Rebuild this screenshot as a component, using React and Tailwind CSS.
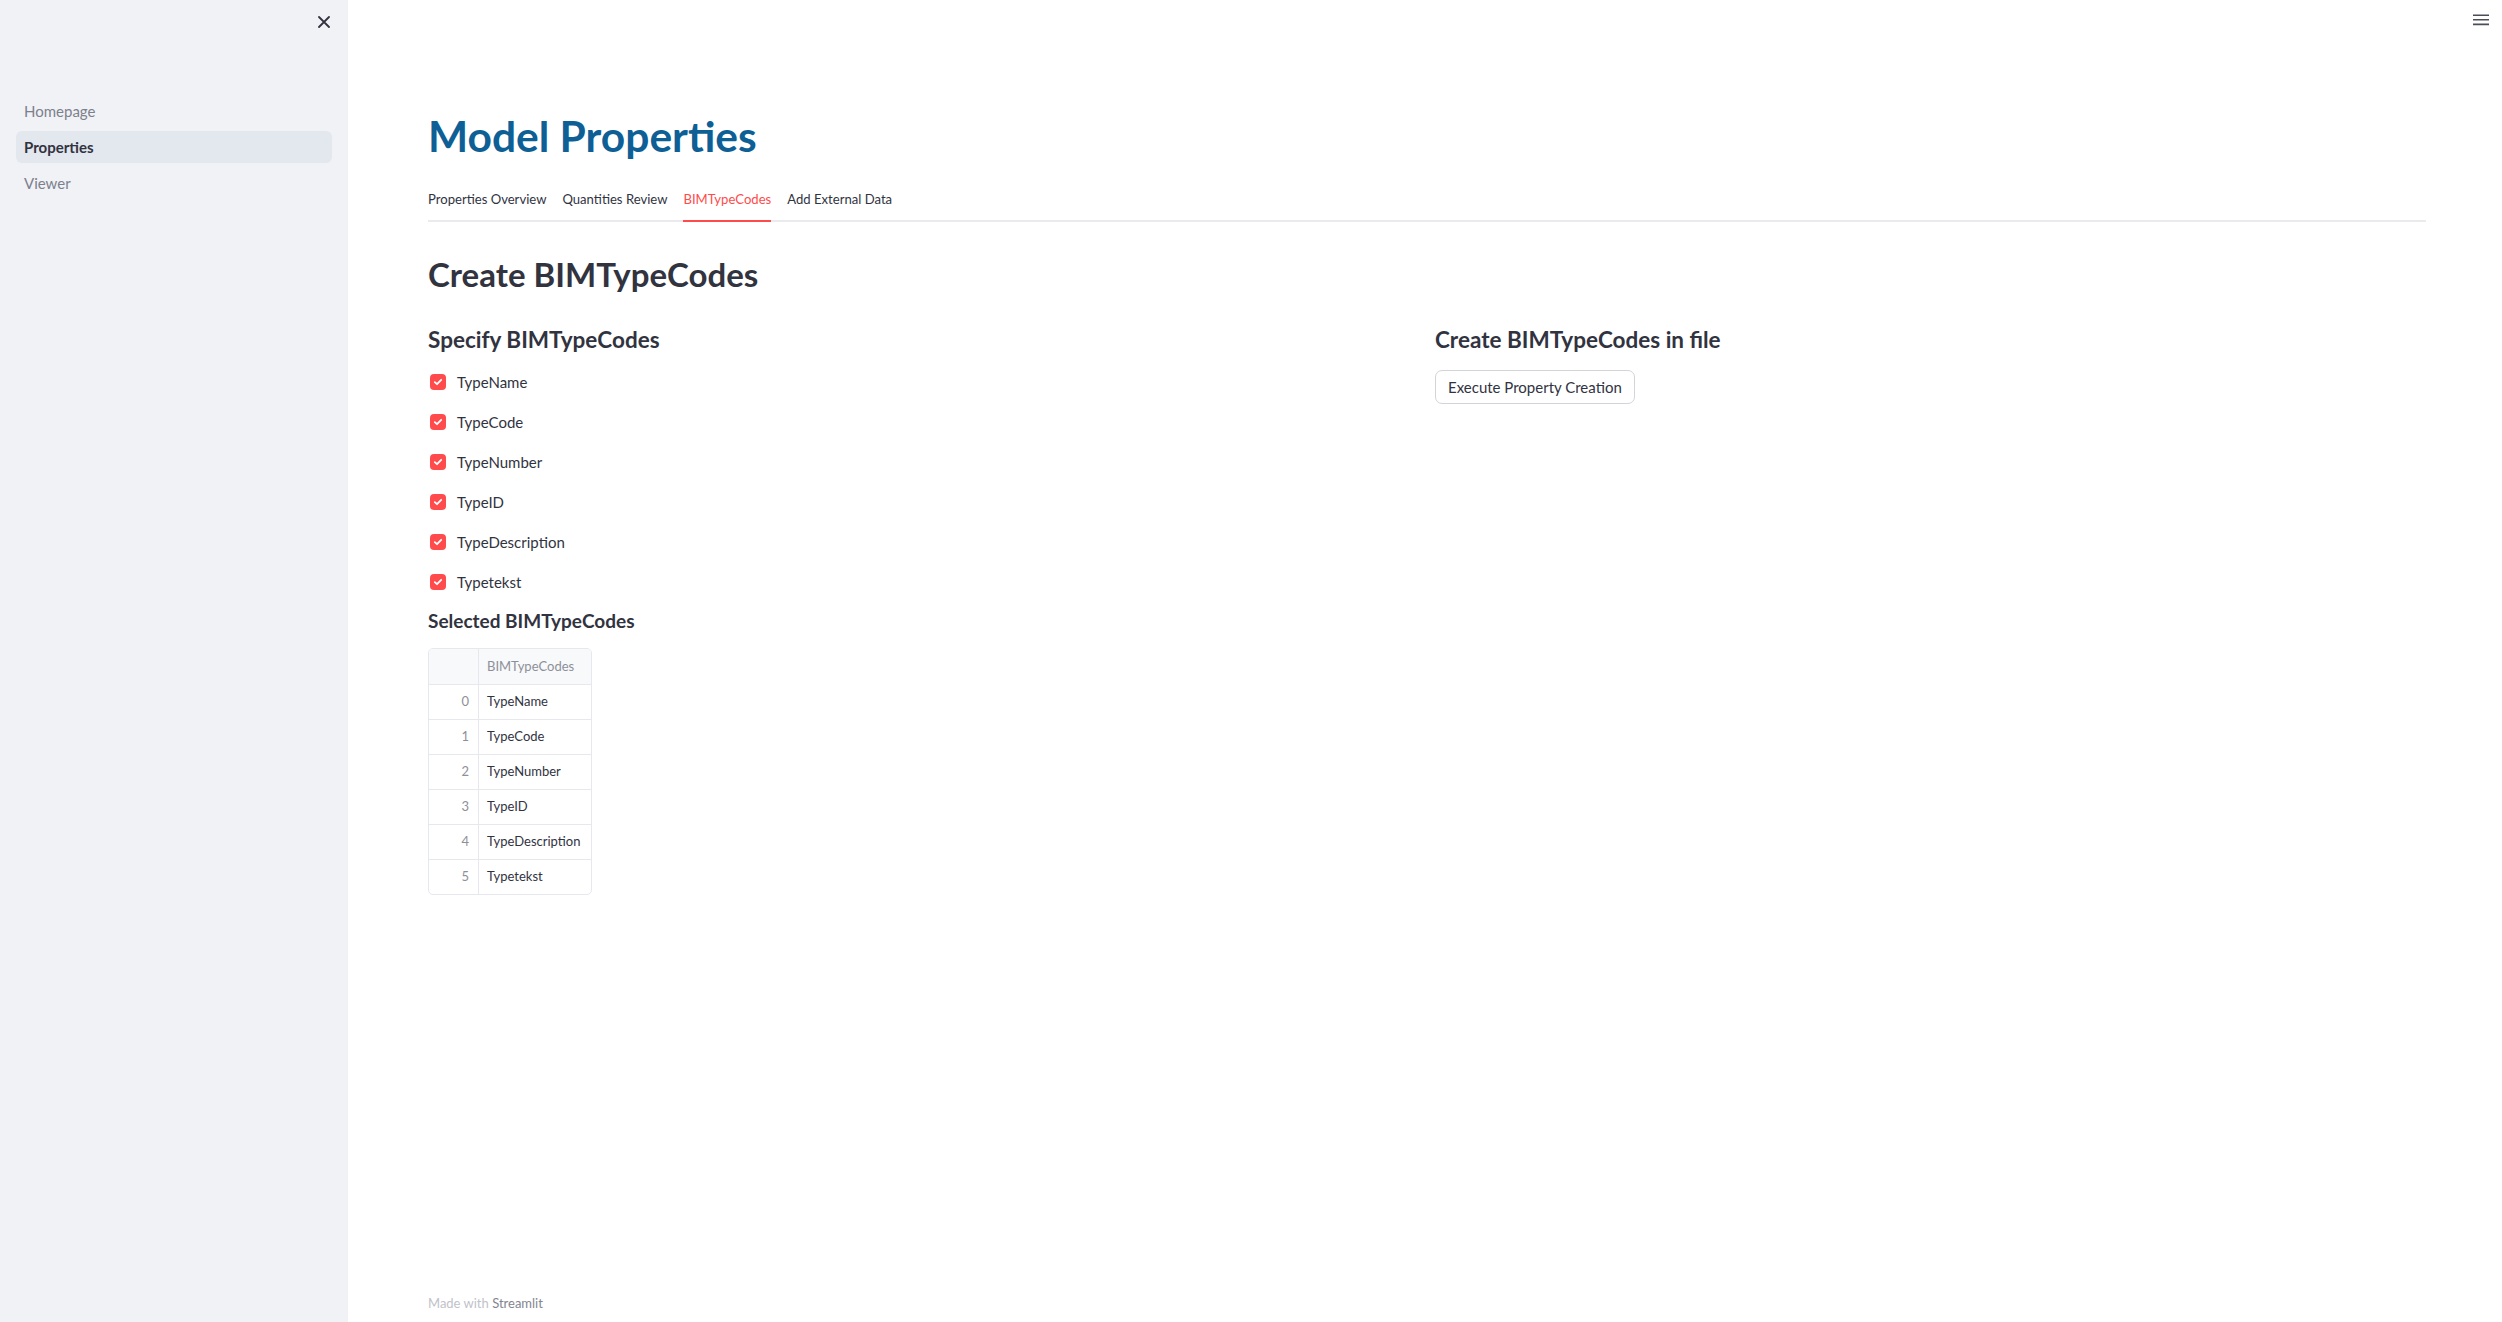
import React from "react";

const checks = ["TypeName", "TypeCode", "TypeNumber", "TypeID", "TypeDescription", "Typetekst"];
const tabs = ["Properties Overview", "Quantities Review", "BIMTypeCodes", "Add External Data"];

function CheckBox() {
  return (
    <span className="flex h-[16px] w-[16px] items-center justify-center rounded-[4px] bg-[#ff4b4b]">
      <svg width="10" height="10" viewBox="0 0 10 10" fill="none">
        <path d="M1.8 5.2 L4 7.2 L8.2 2.8" stroke="white" strokeWidth="1.8" strokeLinecap="round" strokeLinejoin="round" />
      </svg>
    </span>
  );
}

export default function App() {
  return (
    <div className="flex h-[1322px] w-full overflow-hidden font-['Lato','Noto_Sans',sans-serif] text-[#31333f]">
      {/* Sidebar */}
      <aside className="relative w-[348px] shrink-0 bg-[#f0f2f6]">
        <button className="absolute left-[317px] top-[15px] flex h-[14px] w-[14px] items-center justify-center">
          <svg width="12" height="12" viewBox="0 0 12 12" fill="none">
            <path d="M1 1 L11 11 M11 1 L1 11" stroke="#31333f" strokeWidth="1.8" strokeLinecap="round" />
          </svg>
        </button>
        <nav className="flex flex-col gap-[4px] px-[16px] pt-[95px]">
          <div className="flex h-[32px] items-center rounded-[6px] px-[8px] text-[15px] text-[#7d808c]">Homepage</div>
          <div className="flex h-[32px] items-center rounded-[6px] bg-[#e3e7ee] px-[8px] text-[15px] font-bold text-[#31333f]">Properties</div>
          <div className="flex h-[32px] items-center rounded-[6px] px-[8px] text-[15px] text-[#7d808c]">Viewer</div>
        </nav>
      </aside>

      {/* Main */}
      <main className="relative flex min-w-0 flex-1 flex-col bg-white">
        <button className="absolute right-[13px] top-[14px] flex h-[12px] w-[16px] items-center justify-center">
          <svg width="16" height="12" viewBox="0 0 16 12" fill="none">
            <path d="M0 1.2 H16 M0 5.8 H16 M0 10.4 H16" stroke="#4b4d58" strokeWidth="1.6" />
          </svg>
        </button>

        <div className="flex flex-1 flex-col pl-[80px] pr-[76px] pt-[110px]">
          <h1 className="text-[42.5px] font-bold leading-[51px] text-[#0e5f95]">Model Properties</h1>

          {/* Tabs */}
          <div className="mt-[20px] flex gap-[16px] border-b-2 border-[#ebebed]">
            {tabs.map((t) => (
              <div
                key={t}
                className={
                  t === "BIMTypeCodes"
                    ? "-mb-[2px] flex h-[41px] items-center border-b-2 border-[#ff4b4b] pb-[1px] text-[13.1px] text-[#ff4b4b]"
                    : "-mb-[2px] flex h-[41px] items-center border-b-2 border-transparent pb-[1px] text-[13.1px] text-[#31333f]"
                }
              >
                {t}
              </div>
            ))}
          </div>

          <h2 className="mt-[32px] text-[33px] font-bold leading-[40px] text-[#31333f]">Create BIMTypeCodes</h2>

          <div className="mt-[32px] grid grid-cols-2 gap-[16px]">
            {/* Left column */}
            <div className="flex flex-col">
              <h3 className="text-[22.5px] font-bold leading-[27px]">Specify BIMTypeCodes</h3>
              <div className="mt-[17px] flex flex-col gap-[16px]">
                {checks.map((c) => (
                  <label key={c} className="flex h-[24px] items-center gap-[11px] pl-[2px] text-[15px] leading-[24px]">
                    <CheckBox />
                    <span>{c}</span>
                  </label>
                ))}
              </div>
              <h4 className="mt-[15px] text-[19px] font-bold leading-[23px]">Selected BIMTypeCodes</h4>
              <div className="mt-[16px] w-[164px] overflow-hidden rounded-[5px] border border-[#e6e8ee] text-[13px]">
                <div className="flex h-[36px] border-b border-[#e6e8ee] bg-[#f8f9fb]">
                  <div className="w-[50px] border-r border-[#e6e8ee]" />
                  <div className="flex flex-1 items-center pl-[8px] text-[#8e9099]">BIMTypeCodes</div>
                </div>
                {checks.map((c, i) => (
                  <div key={c} className={i < checks.length - 1 ? "flex h-[35px] border-b border-[#e6e8ee]" : "flex h-[34px]"}>
                    <div className="flex w-[50px] items-center justify-end border-r border-[#e6e8ee] pr-[9px] text-[#8e9099]">{i}</div>
                    <div className="flex flex-1 items-center pl-[8px]">{c}</div>
                  </div>
                ))}
              </div>
            </div>

            {/* Right column */}
            <div className="flex flex-col items-start">
              <h3 className="text-[22.5px] font-bold leading-[27px]">Create BIMTypeCodes in file</h3>
              <button className="mt-[17px] flex h-[34px] items-center rounded-[7px] border border-[#d3d4d8] bg-white px-[12px] text-[15px] text-[#31333f]">
                Execute Property Creation
              </button>
            </div>
          </div>

          <footer className="mt-auto pb-[11px] text-[13px] leading-[16px]">
            <span className="text-[#bfc2ca]">Made with </span>
            <span className="text-[#83858f]">Streamlit</span>
          </footer>
        </div>
      </main>
    </div>
  );
}
